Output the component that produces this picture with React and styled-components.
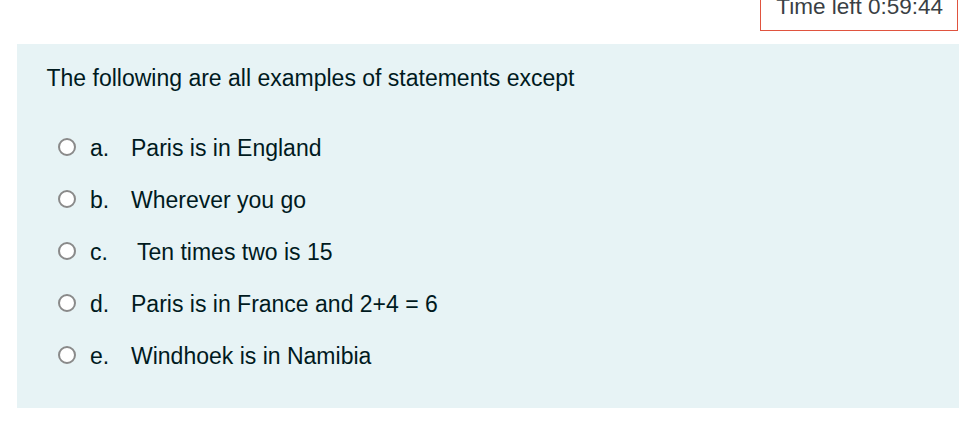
import React from "react";
import styled, { createGlobalStyle } from "styled-components";

const Global = createGlobalStyle`
  html, body { margin: 0; padding: 0; background: #fff; overflow: hidden; }
  body { font-family: "Liberation Sans", Arial, sans-serif; }
`;

const Page = styled.div`
  padding: 0 16px 0 17px;
  display: flex;
  flex-direction: column;
`;

const TimerBar = styled.div`
  display: flex;
  justify-content: flex-end;
  margin-top: -13px;
  margin-right: 1px;
`;

const Timer = styled.div`
  border: 1.5px solid #e0533f;
  padding: 4px 14px 8px 15px;
  font-size: 22.5px;
  line-height: 30px;
  color: #3a3f44;
`;

const Panel = styled.div`
  margin-top: 13px;
  background: #e7f3f5;
  padding: 17px 28px 25px 29.5px;
  color: #001a1e;
  font-size: 23px;
  height: 364px;
  box-sizing: border-box;
`;

const Question = styled.div`
  line-height: 34.5px;
`;

const Options = styled.div`
  margin-top: 27px;
  margin-left: 11.5px;
  display: flex;
  flex-direction: column;
`;

const Row = styled.label`
  display: flex;
  align-items: center;
  height: 52px;
  line-height: 34.5px;
`;

const Radio = styled.span`
  width: 18px;
  height: 18px;
  box-sizing: border-box;
  border-radius: 50%;
  border: 2px solid #8a8a8a;
  background: #fff;
  flex: none;
  margin-bottom: 3px;
  margin-right: 14px;
`;

const Letter = styled.span`
  width: 41px;
  flex: none;
`;

const Text = styled.span`
  white-space: pre;
`;

const options = [
  ["a.", "Paris is in England"],
  ["b.", "Wherever you go"],
  ["c.", " Ten times two is 15"],
  ["d.", "Paris is in France and 2+4 = 6"],
  ["e.", "Windhoek is in Namibia"],
];

export default function App() {
  return (
    <>
      <Global />
      <Page>
        <TimerBar>
          <Timer>Time left 0:59:44</Timer>
        </TimerBar>
        <Panel>
          <Question>The following are all examples of statements except</Question>
          <Options>
            {options.map(([l, t]) => (
              <Row key={l}>
                <Radio />
                <Letter>{l}</Letter>
                <Text>{t}</Text>
              </Row>
            ))}
          </Options>
        </Panel>
      </Page>
    </>
  );
}
